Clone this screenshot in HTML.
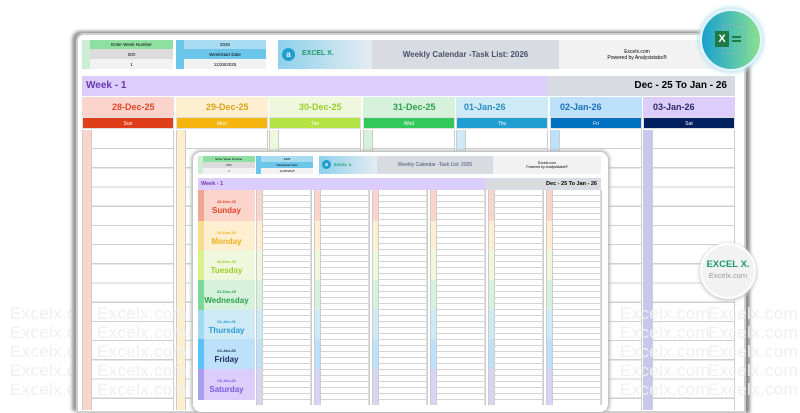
<!DOCTYPE html>
<html><head><meta charset="utf-8"><style>
*{margin:0;padding:0;box-sizing:border-box}
body{width:800px;height:400px;overflow:hidden;background:#fff;position:relative;font-family:"Liberation Sans",sans-serif}
.a{position:absolute}
.wm{position:absolute;color:#efefef;font-size:17px;letter-spacing:.3px;white-space:nowrap}
.sheet{left:76px;top:33px;width:670px;height:380px;background:#fff;border-radius:8px 8px 0 0;box-shadow:-4px -2px 3px #9a9a9a,4px 0 3px #8a8a8a;border:2px solid #cfcfcf}
.c{display:flex;align-items:center;justify-content:center;text-align:center}
.col{position:absolute;top:130px;height:280px;width:92px;border-left:1px solid #ccc;border-right:1px solid #ccc;
background:repeating-linear-gradient(to bottom,transparent 0,transparent 18px,#cfcfcf 18px,#cfcfcf 19.2px)}
.col .s{position:absolute;left:0;top:0;bottom:0;width:9px;border-right:1px solid #ccc}
.dt{position:absolute;top:97px;height:20px;width:92px;font-weight:bold;font-size:9px;padding-left:30px;line-height:20px}
.bar{position:absolute;top:117px;height:12px;width:92px;color:#fff;font-size:5px;text-align:center;line-height:12px;border:1px solid #ddd}
.in{left:193px;top:152px;width:415px;height:260px;background:#fff;border-radius:8px;box-shadow:0 0 3px 2px #bbb}
.tc{position:absolute;top:190px;height:215px;width:56px;border-left:1px solid #ccc;border-right:1px solid #ccc;
background:repeating-linear-gradient(to bottom,transparent 0,transparent 4.8px,#d4d4d4 4.8px,#d4d4d4 6px)}
.tc .s{position:absolute;left:0;top:0;bottom:0;width:6px;border-right:1px solid #ccc;
background:linear-gradient(to bottom,#fbd5cb 0,#fbd5cb 31px,#fdefcf 31px,#fdefcf 60px,#eff8dc 60px,#eff8dc 90px,#d6f2dd 90px,#d6f2dd 120px,#cfeaf7 120px,#cfeaf7 149px,#bde0fb 149px,#bde0fb 179px,#d8d4f4 179px)}
.tc .r{position:absolute;right:0;top:0;bottom:0;width:1px;background:#ddd}
.day{position:absolute;left:198px;width:57px;text-align:center;font-weight:bold}
.day .d{font-size:4px;margin-top:9px}
.day .n{font-size:8px;margin-top:2px}
.day .st{position:absolute;left:0;top:0;bottom:0;width:6px}
</style></head><body>

<div class="wm" style="left:10px;top:304px">Excelx.com</div>
<div class="wm" style="left:10px;top:323px">Excelx.com</div>
<div class="wm" style="left:10px;top:342px">Excelx.com</div>
<div class="wm" style="left:10px;top:361px">Excelx.com</div>
<div class="wm" style="left:10px;top:380px">Excelx.com</div>

<div class="a sheet"></div>

<div class="a" style="left:82px;top:40px;width:91px;height:29px;background:#f2f2f2">
 <div class="a" style="left:0;top:0;width:8px;height:29px;background:#cdeed4"></div>
 <div class="a c" style="left:8px;top:0;width:83px;height:9px;background:#8ee0a0;font-size:4.5px">Enter Week Number</div>
 <div class="a c" style="left:8px;top:9px;width:83px;height:10px;background:#dcdcdc;font-size:4.5px">ISO</div>
 <div class="a c" style="left:8px;top:19px;width:83px;height:10px;font-size:4.5px">1</div>
</div>
<div class="a" style="left:176px;top:40px;width:90px;height:29px;background:#f2f2f2">
 <div class="a" style="left:0;top:0;width:8px;height:29px;background:#6cc6ea"></div>
 <div class="a c" style="left:8px;top:0;width:82px;height:9px;background:#a8dcf2;font-size:4.5px">2026</div>
 <div class="a c" style="left:8px;top:9px;width:82px;height:10px;background:#6cc6ea;font-size:4.5px">WeekStart Date</div>
 <div class="a c" style="left:8px;top:19px;width:82px;height:10px;font-size:4.5px">12/28/2025</div>
</div>
<div class="a" style="left:278px;top:40px;width:94px;height:29px;background:linear-gradient(90deg,#8fd0ec,#e4ecf2)">
 <div class="a c" style="left:4px;top:8px;width:13px;height:13px;border-radius:50%;background:#1f9fd0;color:#fff;font-size:8px;font-weight:bold">a</div>
 <div class="a" style="left:24px;top:10px;font-size:7px;font-weight:bold;color:#1a9a6a">EXCEL X.</div>
</div>
<div class="a c" style="left:372px;top:40px;width:187px;height:29px;background:#d9dbe3;color:#4a4f6a;font-size:8px;font-weight:bold">Weekly Calendar -Task List: 2026</div>
<div class="a c" style="left:559px;top:40px;width:176px;height:29px;background:#f2f2f2;font-size:5px;line-height:6px;padding-right:20px">Excelx.com<br>Powered by Analysistabs®</div>

<div class="a" style="left:82px;top:76px;width:465px;height:20px;background:#dccdfc;color:#6a3ab0;font-size:10px;font-weight:bold;line-height:20px;padding-left:4px">Week - 1</div>
<div class="a" style="left:547px;top:76px;width:188px;height:20px;background:#d9dbe2;font-size:10px;font-weight:bold;line-height:20px;text-align:right;padding-right:8px">Dec - 25 To Jan - 26</div>

<div class="dt" style="left:82px;background:#fbd5cb;color:#e0442a">28-Dec-25</div>
<div class="dt" style="left:176px;background:#fdefcf;color:#d9a21a">29-Dec-25</div>
<div class="dt" style="left:269px;background:#eff8dc;color:#9bcc2a">30-Dec-25</div>
<div class="dt" style="left:363px;background:#d6f2dd;color:#2aa04a">31-Dec-25</div>
<div class="dt" style="left:456px;background:#cfeaf7;color:#2a8bbf;padding-left:8px">01-Jan-26</div>
<div class="dt" style="left:550px;background:#bde0fb;color:#1a6fb8;padding-left:10px">02-Jan-26</div>
<div class="dt" style="left:643px;background:#dccdfc;color:#2a2a6a;padding-left:10px">03-Jan-26</div>

<div class="bar" style="left:82px;background:#e03e1a">Sun</div>
<div class="bar" style="left:176px;background:#f6b40e">Mon</div>
<div class="bar" style="left:269px;background:#b4e444">Tue</div>
<div class="bar" style="left:363px;background:#34c75a">Wed</div>
<div class="bar" style="left:456px;background:#1e9ed1">Thu</div>
<div class="bar" style="left:550px;background:#0070c0">Fri</div>
<div class="bar" style="left:643px;background:#002060">Sat</div>

<div class="col" style="left:82px"><div class="s" style="background:#fbd5cb"></div></div>
<div class="col" style="left:176px"><div class="s" style="background:#fdefcf"></div></div>
<div class="col" style="left:269px"><div class="s" style="background:#eff8dc"></div></div>
<div class="col" style="left:363px"><div class="s" style="background:#d6f2dd"></div></div>
<div class="col" style="left:456px"><div class="s" style="background:#cfeaf7"></div></div>
<div class="col" style="left:550px"><div class="s" style="background:#bde0fb"></div></div>
<div class="col" style="left:643px"><div class="s" style="background:#c9c6f0"></div></div>

<div class="wm" style="left:97px;top:304px">Excelx.com</div>
<div class="wm" style="left:97px;top:323px">Excelx.com</div>
<div class="wm" style="left:97px;top:342px">Excelx.com</div>
<div class="wm" style="left:97px;top:361px">Excelx.com</div>
<div class="wm" style="left:97px;top:380px">Excelx.com</div>
<div class="wm" style="left:620px;top:304px">Excelx.com</div>
<div class="wm" style="left:620px;top:323px">Excelx.com</div>
<div class="wm" style="left:620px;top:342px">Excelx.com</div>
<div class="wm" style="left:620px;top:361px">Excelx.com</div>
<div class="wm" style="left:620px;top:380px">Excelx.com</div>
<div class="wm" style="left:708px;top:304px">Excelx.com</div>
<div class="wm" style="left:708px;top:323px">Excelx.com</div>
<div class="wm" style="left:708px;top:342px">Excelx.com</div>
<div class="wm" style="left:708px;top:361px">Excelx.com</div>
<div class="wm" style="left:708px;top:380px">Excelx.com</div>

<div class="a in"></div>
<div class="a" style="left:198px;top:156px;width:57px;height:18px;background:#f2f2f2">
 <div class="a" style="left:0;top:0;width:5px;height:18px;background:#cdeed4"></div>
 <div class="a c" style="left:5px;top:0;width:52px;height:6px;background:#8ee0a0;font-size:3px">Enter Week Number</div>
 <div class="a c" style="left:5px;top:6px;width:52px;height:6px;background:#dcdcdc;font-size:3px">ISO</div>
 <div class="a c" style="left:5px;top:12px;width:52px;height:6px;font-size:3px">1</div>
</div>
<div class="a" style="left:256px;top:156px;width:57px;height:18px;background:#f2f2f2">
 <div class="a" style="left:0;top:0;width:5px;height:18px;background:#6cc6ea"></div>
 <div class="a c" style="left:5px;top:0;width:52px;height:6px;background:#a8dcf2;font-size:3px">2026</div>
 <div class="a c" style="left:5px;top:6px;width:52px;height:6px;background:#6cc6ea;font-size:3px">WeekStart Date</div>
 <div class="a c" style="left:5px;top:12px;width:52px;height:6px;font-size:3px">12/28/2025</div>
</div>
<div class="a" style="left:319px;top:156px;width:58px;height:18px;background:linear-gradient(90deg,#8fd0ec,#e4ecf2)">
 <div class="a c" style="left:3px;top:4px;width:9px;height:9px;border-radius:50%;background:#1f9fd0;color:#fff;font-size:5px;font-weight:bold">a</div>
 <div class="a" style="left:15px;top:6px;font-size:4px;font-weight:bold;color:#1a9a6a">EXCEL X.</div>
</div>
<div class="a c" style="left:377px;top:156px;width:116px;height:18px;background:#d9dbe3;color:#4a4f6a;font-size:5px">Weekly Calendar -Task List: 2026</div>
<div class="a c" style="left:493px;top:156px;width:108px;height:18px;background:#f2f2f2;font-size:3.5px;line-height:4px">Excelx.com<br>Powered by Analysistabs®</div>
<div class="a" style="left:198px;top:178px;width:287px;height:12px;background:#dccdfc;color:#6a3ab0;font-size:5.5px;font-weight:bold;line-height:12px;padding-left:3px">Week - 1</div>
<div class="a" style="left:485px;top:178px;width:116px;height:12px;background:#d9dbe2;font-size:5.5px;font-weight:bold;line-height:12px;text-align:right;padding-right:4px">Dec - 25 To Jan - 26</div>

<div class="day" style="top:190px;height:31px;background:#fbd5cb;color:#e0442a"><div class="st" style="background:#f2a595"></div><div class="d">28-Dec-25</div><div class="n">Sunday</div></div>
<div class="day" style="top:221px;height:29px;background:#fdefcf;color:#f0b020"><div class="st" style="background:#fbdc8e"></div><div class="d">29-Dec-25</div><div class="n">Monday</div></div>
<div class="day" style="top:250px;height:30px;background:#eff8dc;color:#9bcc2a"><div class="st" style="background:#d8f08e"></div><div class="d">30-Dec-25</div><div class="n">Tuesday</div></div>
<div class="day" style="top:280px;height:30px;background:#d6f2dd;color:#2aa04a"><div class="st" style="background:#7ed89a"></div><div class="d">31-Dec-25</div><div class="n">Wednesday</div></div>
<div class="day" style="top:310px;height:29px;background:#cfeaf7;color:#2a9bd0"><div class="st" style="background:#a2d8f0"></div><div class="d">01-Jan-26</div><div class="n">Thursday</div></div>
<div class="day" style="top:339px;height:30px;background:#bde0fb;color:#1a2a5a"><div class="st" style="background:#5cc0f8"></div><div class="d">02-Jan-26</div><div class="n">Friday</div></div>
<div class="day" style="top:369px;height:31px;background:#dccdfc;color:#7a5ae0"><div class="st" style="background:#a89ff0"></div><div class="d">03-Jan-26</div><div class="n">Saturday</div></div>

<div class="tc" style="left:256px"><div class="s"></div><div class="r"></div></div>
<div class="tc" style="left:314px"><div class="s"></div><div class="r"></div></div>
<div class="tc" style="left:372px"><div class="s"></div><div class="r"></div></div>
<div class="tc" style="left:430px"><div class="s"></div><div class="r"></div></div>
<div class="tc" style="left:488px"><div class="s"></div><div class="r"></div></div>
<div class="tc" style="left:546px"><div class="s"></div><div class="r"></div></div>

<div class="a" style="left:700px;top:9px;width:62px;height:62px;border-radius:50%;background:linear-gradient(90deg,#1aa0d0,#88e090);box-shadow:0 0 4px 2px #bfe6f2;border:2px solid #e8f6fb">
 <div class="a" style="left:20px;top:13px;width:24px;height:30px;border:1px solid #8ab;border-radius:2px;opacity:.6"></div>
 <div class="a c" style="left:13px;top:20px;width:14px;height:16px;background:#1d7a45;color:#fff;font-weight:bold;font-size:11px">X</div>
 <div class="a" style="left:30px;top:25px;width:9px;height:2px;background:#1d7a45;box-shadow:0 4px 0 #1d7a45"></div>
</div>
<div class="a" style="left:700px;top:243px;width:56px;height:56px;border-radius:50%;background:#f2f2f2;box-shadow:0 1px 3px 1px #ccc;border:2px solid #fff">
 <div class="a" style="left:0;top:14px;width:52px;text-align:center;font-size:9.5px;font-weight:bold;color:#1a9a6a">EXCEL X.</div>
 <div class="a" style="left:0;top:26px;width:52px;text-align:center;font-size:7.5px;color:#999">Excelx.com</div>
</div>
</body></html>
